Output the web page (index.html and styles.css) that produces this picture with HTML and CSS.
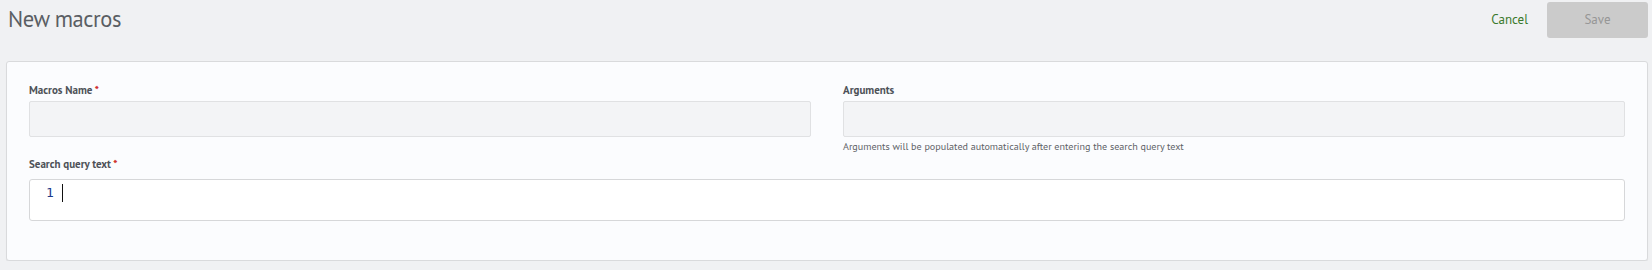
FILE: index.html
```html
<!DOCTYPE html>
<html>
<head>
<meta charset="utf-8">
<link rel="stylesheet" href="styles.css">
</head>
<body>
<div class="header">
  <h1 class="title">New macros</h1>
  <div class="actions">
    <a class="cancel">Cancel</a>
    <button class="save">Save</button>
  </div>
</div>
<div class="card">
  <div class="row">
    <div class="field">
      <label class="label">Macros Name <span class="req">*</span></label>
      <div class="input"></div>
    </div>
    <div class="field">
      <label class="label">Arguments</label>
      <div class="input"></div>
      <div class="help">Arguments will be populated automatically after entering the search query text</div>
    </div>
  </div>
  <div class="field query">
    <label class="label">Search query text <span class="req">*</span></label>
    <div class="editor">
      <span class="lineno">1</span>
      <span class="cursor"></span>
    </div>
  </div>
</div>
</body>
</html>
```
FILE: styles.css
```css
html, body {
  margin: 0;
  padding: 0;
  background: #f0f1f3;
  font-family: "PT Sans", Lato, "Liberation Sans", sans-serif;
}
body {
  padding: 0 4px 0 6px;
}
.header {
  display: flex;
  align-items: center;
  justify-content: space-between;
  height: 38px;
}
.title {
  margin: 0 0 2px 2px;
  font-size: 22.5px;
  font-weight: 400;
  color: #5a5e63;
  letter-spacing: -0.4px;
}
.actions {
  display: flex;
  align-items: center;
  gap: 19px;
}
.cancel {
  color: #3b7a2b;
  font-size: 13px;
  cursor: pointer;
}
.save {
  width: 101px;
  height: 36px;
  border: none;
  border-radius: 3px;
  background: #cbcbcb;
  color: #969696;
  font-family: inherit;
  font-size: 13px;
  margin-top: 1px;
}
.card {
  margin-top: 23px;
  background: #fbfcfe;
  border: 1px solid #d9dadc;
  border-radius: 3px;
  box-shadow: 0 1px 1px rgba(0,0,0,0.06);
  padding: 21px 22px 0;
  height: 177px;
}
.row {
  display: grid;
  grid-template-columns: 1fr 1fr;
  column-gap: 32px;
}
.field {
  display: flex;
  flex-direction: column;
}
.label {
  font-size: 11px;
  font-weight: 700;
  color: #4d5157;
  line-height: 14px;
  height: 14px;
  margin-bottom: 4px;
}
.req {
  color: #d0312d;
}
.input {
  height: 34px;
  background: #f3f4f6;
  border: 1px solid #e0e1e3;
  border-radius: 2px;
}
.help {
  margin-top: 4px;
  font-size: 10.1px;
  line-height: 12px;
  color: #5e6267;
}
.query {
  margin-top: 4px;
}
.query .label {
  margin-bottom: 8px;
}
.editor {
  background: #ffffff;
  border: 1px solid #d6d7d9;
  border-radius: 3px;
  display: flex;
  align-items: flex-start;
  padding-top: 4px;
  box-sizing: border-box;
  height: 42px;
}
.lineno {
  font-family: "DejaVu Sans Mono", monospace;
  font-size: 13px;
  color: #1d3a8a;
  line-height: 18px;
  margin-left: 16px;
}
.cursor {
  display: inline-block;
  width: 1px;
  height: 18px;
  background: #111;
  margin-left: 8px;
}
```
